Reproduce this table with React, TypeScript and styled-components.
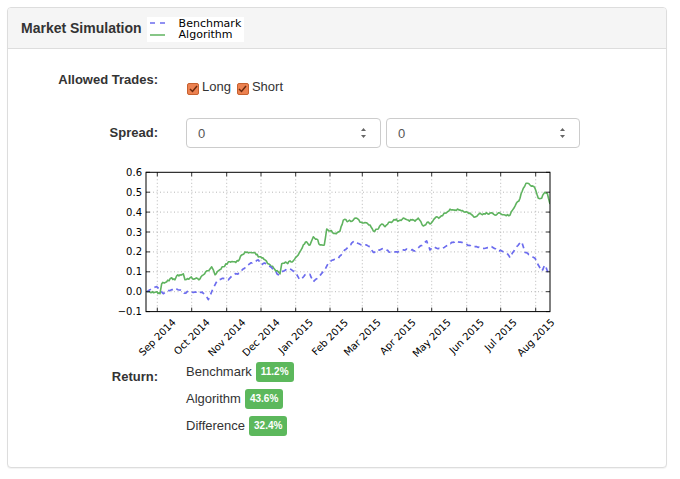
import * as React from 'react';
import styled, { createGlobalStyle } from 'styled-components';

const GlobalStyle = createGlobalStyle`
  html, body {
    margin: 0;
    padding: 0;
    background: #fff;
  }
  body {
    font-family: "Liberation Sans", Arial, Helvetica, sans-serif;
    color: #333;
  }
`;

const Page = styled.div`
  padding: 7px;
`;

const Panel = styled.section`
  width: 660px;
  box-sizing: border-box;
  border: 1px solid #ddd;
  border-radius: 4px;
  box-shadow: 0 1px 1px rgba(0, 0, 0, 0.05);
  background: #fff;
`;

const PanelHeader = styled.header`
  height: 41px;
  box-sizing: border-box;
  display: flex;
  align-items: center;
  padding-left: 13px;
  background: #f5f5f5;
  border-bottom: 1px solid #ddd;
  border-radius: 3px 3px 0 0;
`;

const Title = styled.h3`
  margin: 0 5px 0 0;
  font-size: 14px;
  font-weight: bold;
  color: #333;
`;

const Legend = styled.div`
  background: #fff;
  width: 97px;
  height: 25px;
  box-sizing: border-box;
  padding: 1px 0 0 3px;
  margin-top: 2px;
  display: flex;
  flex-direction: column;
`;

const LegendRow = styled.div`
  display: flex;
  align-items: center;
  height: 11.5px;
  gap: 14px;
`;

const LegendLabel = styled.span`
  font-family: "DejaVu Sans", sans-serif;
  font-size: 11px;
  color: #000;
  line-height: 11px;
`;

const PanelBody = styled.div`
  padding-bottom: 31px;
`;

const FieldRow = styled.div<{ $top: number }>`
  display: grid;
  grid-template-columns: 150px 1fr;
  column-gap: 28px;
  margin-top: ${p => p.$top}px;
`;

const FieldLabel = styled.label<{ $pad?: number; $lh: number }>`
  text-align: right;
  font-size: 13px;
  font-weight: bold;
  color: #333;
  line-height: ${p => p.$lh}px;
  padding-top: ${p => p.$pad || 0}px;
`;

const CheckGroup = styled.div`
  display: flex;
  align-items: center;
  padding-top: 7px;
  height: 20px;
  gap: 5px;
`;

const CheckItem = styled.label`
  display: flex;
  align-items: center;
  gap: 3px;
  font-size: 13px;
  color: #333;
  line-height: 20px;
`;

const CheckBox = styled.span`
  width: 12px;
  height: 12px;
  margin: 3px 0 0 1px;
  box-sizing: border-box;
  border: 1px solid #c7612f;
  border-radius: 2px;
  background: #ec8150;
  display: flex;
  align-items: center;
  justify-content: center;
`;

const Inputs = styled.div`
  display: flex;
  gap: 5px;
`;

const NumberField = styled.div<{ $w: number }>`
  width: ${p => p.$w}px;
  height: 30px;
  box-sizing: border-box;
  border: 1px solid #ccc;
  border-radius: 4px;
  display: flex;
  align-items: center;
  padding: 0 13px 0 11px;
  background: #fff;
`;

const FieldInput = styled.input`
  flex: 1;
  min-width: 0;
  border: none;
  outline: none;
  padding: 0;
  font-family: "Liberation Sans", Arial, sans-serif;
  font-size: 13px;
  color: #555;
  background: transparent;
`;

const ChartRow = styled.div`
  margin-top: 12px;
  padding-left: 102px;
  height: 200px;
`;

const ReturnList = styled.div`
  display: flex;
  flex-direction: column;
  gap: 5px;
`;

const ReturnItem = styled.div`
  display: flex;
  align-items: center;
  gap: 4px;
  height: 22px;
  font-size: 13px;
  color: #333;
`;

const Badge = styled.span`
  display: inline-block;
  background: #5cb85c;
  color: #fff;
  font-size: 10px;
  font-weight: bold;
  line-height: 12px;
  padding: 4px 5px;
  border-radius: 3px;
  margin-top: 1px;
`;

// ---- chart ----

const SVG_LEFT = 110;
const SVG_TOP = 160;
const sx = (px: number) => px - SVG_LEFT;
const sy = (v: number) => 291.7 - v * 199 - SVG_TOP;

const X0 = sx(146);
const X1 = sx(550);
const Y0 = sy(0.6);
const Y1 = sy(-0.1);

const months: [string, number][] = [
  ['Sep 2014', 157.3],
  ['Oct 2014', 191.7],
  ['Nov 2014', 226.7],
  ['Dec 2014', 261],
  ['Jan 2015', 295.7],
  ['Feb 2015', 330],
  ['Mar 2015', 362.3],
  ['Apr 2015', 397.7],
  ['May 2015', 431.7],
  ['Jun 2015', 466.7],
  ['Jul 2015', 500.7],
  ['Aug 2015', 535.7],
];

const yTicks = [0.6, 0.5, 0.4, 0.3, 0.2, 0.1, 0.0, -0.1];

const algorithm: [number, number][] = [
  [146.7, 0.0], [150, -0.002], [153.3, -0.005], [157, 0.0], [160, -0.01], [161.7, 0.04],
  [166.7, 0.05], [169, 0.055], [171.7, 0.07], [175, 0.06], [176.7, 0.08], [180, 0.085],
  [183.3, 0.09], [185, 0.06], [190, 0.07], [195, 0.065], [200, 0.065], [203.3, 0.085],
  [208.3, 0.105], [211.7, 0.125], [213.3, 0.11], [215, 0.085], [218.3, 0.105], [223.3, 0.125],
  [228.3, 0.15], [233.3, 0.15], [238.3, 0.155], [241.7, 0.185], [245, 0.2], [248.3, 0.195],
  [251.7, 0.196], [255, 0.196], [258.3, 0.175], [261.7, 0.17], [265, 0.16], [270, 0.135],
  [275, 0.11], [278.3, 0.1], [280, 0.09], [281.7, 0.14], [286.7, 0.145], [293.3, 0.155],
  [298.3, 0.185], [303.3, 0.235], [306.7, 0.25], [310, 0.235], [313.3, 0.276], [316.7, 0.265],
  [320, 0.235], [324.3, 0.235], [326.7, 0.315], [330, 0.305], [335, 0.293], [340, 0.305],
  [343.3, 0.36], [348.3, 0.355], [353.3, 0.36], [356, 0.37], [360, 0.35], [365, 0.347],
  [370, 0.335], [373.3, 0.305], [378.3, 0.315], [381.7, 0.34], [385, 0.327], [390, 0.35],
  [395, 0.36], [400, 0.36], [403.3, 0.37], [408.3, 0.36], [415, 0.355], [418.3, 0.37],
  [423.3, 0.33], [428.3, 0.35], [430, 0.34], [435, 0.37], [440, 0.375], [445, 0.395],
  [450, 0.415], [455, 0.41], [460, 0.41], [465, 0.4], [470, 0.395], [475, 0.375],
  [480, 0.395], [485, 0.39], [490, 0.395], [495, 0.385], [500, 0.395], [505, 0.385],
  [510, 0.385], [515, 0.43], [520, 0.47], [523.3, 0.52], [526, 0.545], [530, 0.536],
  [535, 0.52], [538.3, 0.47], [541.7, 0.47], [545, 0.5], [547.3, 0.495], [550, 0.44],
];

const benchmark: [number, number][] = [
  [146.7, 0.0], [151.7, 0.017], [156.7, 0.025], [160, 0.01], [163.3, -0.01], [167, 0.0],
  [171.7, 0.01], [175, 0.017], [178, 0.01], [181.7, 0.005], [185, -0.008], [188.3, 0.003],
  [193.3, -0.003], [198.3, 0.003], [203.3, -0.008], [206.7, -0.025], [208.3, -0.04], [211.7, 0.0],
  [215, 0.034], [218.3, 0.06], [223.3, 0.067], [228.3, 0.06], [233.3, 0.085], [240, 0.093],
  [243.3, 0.115], [248.3, 0.135], [253.3, 0.15], [258.3, 0.16], [261.7, 0.135], [265, 0.143],
  [270, 0.126], [275, 0.104], [278.3, 0.085], [282, 0.1], [286.7, 0.115], [290, 0.113],
  [295, 0.1], [300, 0.06], [305, 0.085], [310, 0.087], [313.3, 0.05], [318.3, 0.075],
  [324.3, 0.104], [328.3, 0.143], [333.3, 0.16], [338.3, 0.167], [343.3, 0.2], [348.3, 0.226],
  [354.3, 0.255], [360, 0.238], [365, 0.235], [370, 0.226], [373.3, 0.198], [378.3, 0.21],
  [383.3, 0.218], [390, 0.198], [396.7, 0.2], [403.3, 0.21], [410, 0.213], [415, 0.205],
  [418.3, 0.22], [423.3, 0.238], [426.7, 0.255], [430, 0.21], [433.3, 0.226], [436.7, 0.218],
  [441.7, 0.215], [446.7, 0.231], [451.7, 0.248], [456.7, 0.255], [461.7, 0.248], [466.7, 0.238],
  [471.7, 0.226], [476.7, 0.226], [481.7, 0.218], [486.7, 0.22], [491.7, 0.226], [496.7, 0.21],
  [501.7, 0.205], [506.7, 0.193], [510, 0.171], [513.3, 0.2], [516.7, 0.226], [521.7, 0.251],
  [523.3, 0.226], [525, 0.198], [530, 0.184], [535, 0.168], [538.3, 0.134], [541.7, 0.104],
  [545, 0.134], [547.3, 0.104], [550, 0.092],
];

const noise = (i: number, seed: number) => {
  const s = Math.sin(i * 12.9898 + seed * 78.233) * 43758.5453;
  return s - Math.floor(s) - 0.5;
};

// interpolate to roughly daily steps with a little jitter, like the raw series
const toPath = (pts: [number, number][], amp: number, seed: number) => {
  const out: string[] = [];
  let n = 0;
  for (let i = 0; i < pts.length - 1; i++) {
    const [xa, va] = pts[i];
    const [xb, vb] = pts[i + 1];
    const steps = Math.max(1, Math.round((xb - xa) / 1.15));
    for (let k = 0; k < steps; k++) {
      const t = k / steps;
      const v = va + (vb - va) * t + (k === 0 ? 0 : noise(n, seed) * amp);
      out.push(`${sx(xa + (xb - xa) * t).toFixed(1)},${sy(v).toFixed(1)}`);
      n++;
    }
  }
  const [xl, vl] = pts[pts.length - 1];
  out.push(`${sx(xl).toFixed(1)},${sy(vl).toFixed(1)}`);
  return 'M' + out.join(' L');
};

const charW: Record<string, number> = {
  S: 6.35, e: 6.15, p: 6.35, O: 7.87, c: 5.5, t: 3.92, N: 7.48, o: 6.12, v: 5.92,
  D: 7.7, J: 2.95, a: 6.13, n: 6.34, F: 5.75, b: 6.35, M: 8.63, r: 4.11, A: 6.84,
  y: 5.92, u: 6.34, l: 2.78, g: 6.35, ' ': 3.18,
};
const textWidth = (s: string) =>
  s.split('').reduce((w, ch) => w + (charW[ch] ?? 6.36), 0);

const Chart = () => {
  const algPath = React.useMemo(() => toPath(algorithm, 0.012, 1), []);
  const benPath = React.useMemo(() => toPath(benchmark, 0.006, 2), []);
  return (
    <svg width={460} height={200} viewBox="0 0 460 200" fontFamily="DejaVu Sans, sans-serif">
      <g stroke="#999" strokeWidth={0.7} strokeDasharray="1 2.5">
        {months.map(([m, px]) => (
          <line key={m} x1={sx(px)} x2={sx(px)} y1={Y0} y2={Y1} />
        ))}
        {yTicks.slice(1, -1).map(v => (
          <line key={v} x1={X0} x2={X1} y1={sy(v)} y2={sy(v)} />
        ))}
      </g>
      <defs>
        <clipPath id="plot">
          <rect x={X0} y={Y0} width={X1 - X0} height={Y1 - Y0} />
        </clipPath>
      </defs>
      <g clipPath="url(#plot)" fill="none" strokeLinejoin="round">
        <path d={algPath} stroke="#5fb35f" strokeWidth={1.6} />
        <path d={benPath} stroke="#6c6cee" strokeWidth={1.7} strokeDasharray="5 4" />
      </g>
      <g stroke="#000" strokeWidth={0.8}>
        {months.map(([m, px]) => (
          <g key={m}>
            <line x1={sx(px)} x2={sx(px)} y1={Y1} y2={Y1 - 4} />
            <line x1={sx(px)} x2={sx(px)} y1={Y0} y2={Y0 + 4} />
          </g>
        ))}
        {yTicks.map(v => (
          <g key={v}>
            <line x1={X0} x2={X0 + 4} y1={sy(v)} y2={sy(v)} />
            <line x1={X1} x2={X1 - 4} y1={sy(v)} y2={sy(v)} />
          </g>
        ))}
      </g>
      <rect x={X0} y={Y0} width={X1 - X0} height={Y1 - Y0} fill="none" stroke="#000" strokeWidth={1} />
      <g fontSize={10} fill="#000">
        {yTicks.map(v => (
          <text key={v} x={X0 - 4} y={sy(v)} textAnchor="end" dominantBaseline="central">
            {v < 0 ? '\u2212' + Math.abs(v).toFixed(1) : v.toFixed(1)}
          </text>
        ))}
        {months.map(([m, px]) => {
          const cy = Y1 + 5 + (textWidth(m) + 11) * 0.354;
          return (
            <text
              key={m}
              textAnchor="middle"
              dominantBaseline="central"
              transform={`translate(${sx(px)} ${cy.toFixed(1)}) rotate(-45)`}
            >
              {m}
            </text>
          );
        })}
      </g>
    </svg>
  );
};

const Check = () => (
  <CheckBox>
    <svg width={9} height={8} viewBox="0 0 9 8">
      <path d="M1 4 L3.5 6.5 L8 1" fill="none" stroke="#6b2a0e" strokeWidth={1.5} />
    </svg>
  </CheckBox>
);

const Spinner = () => (
  <svg width={7} height={12} viewBox="0 0 7 12">
    <path d="M1 4 L3.5 1 L6 4 Z" fill="#666" />
    <path d="M1 8 L3.5 11 L6 8 Z" fill="#666" />
  </svg>
);

const Field = ({ width }: { width: number }) => (
  <NumberField $w={width}>
    <FieldInput type="text" readOnly value="0" />
    <Spinner />
  </NumberField>
);

const App = () => (
  <Page>
    <GlobalStyle />
    <Panel>
      <PanelHeader>
        <Title>Market Simulation</Title>
        <Legend>
          <LegendRow>
            <svg width={15} height={4}>
              <line x1={0} x2={15} y1={2} y2={2} stroke="#6c6cee" strokeWidth={1.5} strokeDasharray="5 5" />
            </svg>
            <LegendLabel>Benchmark</LegendLabel>
          </LegendRow>
          <LegendRow>
            <svg width={15} height={4}>
              <line x1={0} x2={15} y1={2} y2={2} stroke="#5fb35f" strokeWidth={1.5} />
            </svg>
            <LegendLabel>Algorithm</LegendLabel>
          </LegendRow>
        </Legend>
      </PanelHeader>
      <PanelBody>
        <FieldRow $top={21}>
          <FieldLabel $lh={20}>Allowed Trades:</FieldLabel>
          <CheckGroup>
            <CheckItem>
              <Check />
              Long
            </CheckItem>
            <CheckItem>
              <Check />
              Short
            </CheckItem>
          </CheckGroup>
        </FieldRow>
        <FieldRow $top={21}>
          <FieldLabel $lh={30}>Spread:</FieldLabel>
          <Inputs>
            <Field width={195} />
            <Field width={194} />
          </Inputs>
        </FieldRow>
        <ChartRow>
          <Chart />
        </ChartRow>
        <FieldRow $top={0}>
          <FieldLabel $lh={22} $pad={6}>Return:</FieldLabel>
          <ReturnList>
            <ReturnItem>
              Benchmark <Badge>11.2%</Badge>
            </ReturnItem>
            <ReturnItem>
              Algorithm <Badge>43.6%</Badge>
            </ReturnItem>
            <ReturnItem>
              Difference <Badge>32.4%</Badge>
            </ReturnItem>
          </ReturnList>
        </FieldRow>
      </PanelBody>
    </Panel>
  </Page>
);

export default App;
